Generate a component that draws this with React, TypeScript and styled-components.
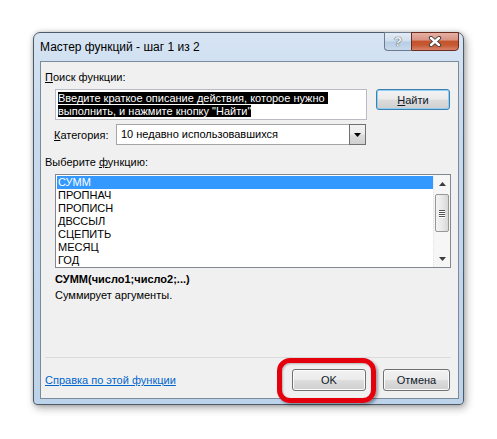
import React from "react";
import styled, { createGlobalStyle } from "styled-components";

const GlobalStyle = createGlobalStyle`
  html, body { margin: 0; padding: 0; background: #ffffff; }
  body { font-family: "Liberation Sans", Arial, sans-serif; }
  #root { width: 497px; height: 439px; }
`;

const Page = styled.div`
  width: 497px;
  height: 439px;
  box-sizing: border-box;
  padding: 32px 0 0 33px;
  background: #ffffff;
  overflow: hidden;
`;

const Window = styled.div`
  width: 431px;
  height: 373px;
  box-sizing: border-box;
  border: 1px solid #4e5a68;
  border-radius: 7px 7px 4px 4px;
  background: linear-gradient(180deg, #d6e4f3 0%, #c8daee 25%, #bcd3ea 100%);
  box-shadow: 2px 3px 9px rgba(0, 0, 0, 0.32), 0 0 4px rgba(0, 0, 0, 0.18);
  display: flex;
  flex-direction: column;
`;

const TitleBar = styled.div`
  height: 28px;
  flex: none;
  display: flex;
  align-items: flex-start;
  padding: 0 4px 0 6px;
`;

const Title = styled.div`
  flex: 1;
  font-size: 12px;
  line-height: 28px;
  color: #000;
  white-space: nowrap;
`;

const CaptionButtons = styled.div`
  display: flex;
  margin-top: -1px;
`;

const HelpButton = styled.div`
  width: 27px;
  height: 19px;
  box-sizing: border-box;
  border: 1px solid #6c7b8d;
  border-right: none;
  border-radius: 0 0 0 4px;
  background: linear-gradient(180deg, #e3ecf6 0%, #cfdeee 48%, #b7cce3 52%, #c7d9ec 100%);
  display: flex;
  align-items: center;
  justify-content: center;
  font-size: 13px;
  font-weight: bold;
  color: #f3f3f3;
  text-shadow: 0 0 1px #404a55, 0 0 1px #404a55;
`;

const CloseButton = styled.div`
  width: 48px;
  height: 19px;
  box-sizing: border-box;
  border: 1px solid #6a2c1e;
  border-radius: 0 0 4px 0;
  background: linear-gradient(180deg, #e6b0a4 0%, #d99484 40%, #c4532d 50%, #c65a33 72%, #d8826a 100%);
  display: flex;
  align-items: center;
  justify-content: center;
`;

const Client = styled.div`
  flex: 1;
  margin: 0 4px 5px 6px;
  border: 1px solid #7b8a9b;
  background: #f0f0f0;
  display: flex;
  flex-direction: column;
  padding: 8px 8px 7px 4px;
  font-size: 11px;
  color: #000;
`;

const Label = styled.div<{ $top?: number; $left?: number }>`
  line-height: 14px;
  height: 14px;
  margin-top: ${(p) => p.$top ?? 0}px;
  margin-left: ${(p) => p.$left ?? 0}px;
  white-space: nowrap;
`;

const Key = styled.span`
  text-decoration: underline;
`;

const SearchRow = styled.div`
  display: flex;
  align-items: flex-start;
  gap: 9px;
  margin: 5px 0 0 10px;
`;

const SearchBox = styled.div`
  width: 312px;
  height: 31px;
  box-sizing: border-box;
  border: 1px solid #abadb3;
  border-color: #abadb3 #dbdfe6 #e3e9ef #e2e3ea;
  background: #fff;
  padding: 2px;
  outline: 1px solid #b9bcc4;
  outline-offset: -1px;
`;

const SelLine = styled.div`
  height: 13px;
  line-height: 13px;
  white-space: pre;
`;

const Selected = styled.span`
  background: #000;
  color: #fff;
`;

const PushButton = styled.div<{ $w: number; $h?: number; $default?: boolean }>`
  width: ${(p) => p.$w}px;
  height: ${(p) => p.$h ?? 22}px;
  box-sizing: border-box;
  border: 1px solid ${(p) => (p.$default ? "#3c7fb1" : "#707070")};
  border-radius: 3px;
  background: linear-gradient(180deg, #f2f2f2 0%, #ebebeb 49%, #dddddd 51%, #cfcfcf 100%);
  box-shadow: inset 0 0 0 1px ${(p) => (p.$default ? "#8fd0f4" : "#fbfbfb")};
  display: flex;
  align-items: center;
  justify-content: center;
  font-size: 11px;
  color: #10192a;
  flex: none;
`;

const CategoryRow = styled.div`
  display: flex;
  align-items: center;
  margin: 4px 0 0 9px;
`;

const CategoryLabel = styled.div`
  width: 62px;
  line-height: 14px;
  white-space: nowrap;
`;

const Combo = styled.div`
  width: 250px;
  height: 21px;
  box-sizing: border-box;
  border: 1px solid #a5a5a5;
  background: #fff;
  display: flex;
  align-items: stretch;
`;

const ComboText = styled.div`
  flex: 1;
  padding-left: 4px;
  line-height: 19px;
  white-space: nowrap;
`;

const DropButton = styled.div`
  width: 17px;
  box-sizing: border-box;
  border: 1px solid #707070;
  margin: -1px -1px -1px 0;
  background: linear-gradient(180deg, #f2f2f2 0%, #ebebeb 49%, #dddddd 51%, #cfcfcf 100%);
  display: flex;
  align-items: center;
  justify-content: center;
`;

const List = styled.div`
  margin: 5px 0 0 10px;
  width: 396px;
  height: 94px;
  box-sizing: border-box;
  border: 1px solid #828790;
  background: #fff;
  display: flex;
  padding: 1px 0 1px 1px;
`;

const Items = styled.div`
  flex: 1;
`;

const Item = styled.div<{ $selected?: boolean }>`
  height: 13px;
  line-height: 13px;
  padding-left: 1px;
  background: ${(p) => (p.$selected ? "#3399ff" : "transparent")};
  color: ${(p) => (p.$selected ? "#fff" : "#000")};
`;

const ScrollBar = styled.div`
  width: 17px;
  margin-top: -1px;
  margin-bottom: -1px;
  background: #f6f6f6;
  border-left: 1px dotted #e2e2e2;
  box-sizing: border-box;
  display: flex;
  flex-direction: column;
  align-items: center;
`;

const ArrowCell = styled.div`
  height: 17px;
  width: 100%;
  display: flex;
  align-items: center;
  justify-content: center;
`;

const Thumb = styled.div`
  margin-top: 2px;
  width: 14px;
  height: 38px;
  box-sizing: border-box;
  border: 1px solid #979797;
  border-radius: 2px;
  background: linear-gradient(90deg, #f3f3f3 0%, #e9e9e9 50%, #d7d7d7 100%);
  display: flex;
  flex-direction: column;
  align-items: center;
  justify-content: center;
  gap: 1px;
`;

const Grip = styled.div`
  width: 6px;
  height: 1px;
  background: #555;
  box-shadow: 0 1px 0 #fff;
`;

const Track = styled.div`
  flex: 1;
`;

const Signature = styled.div`
  margin: 4px 0 0 10px;
  line-height: 14px;
  font-weight: bold;
  white-space: nowrap;
`;

const Description = styled.div`
  margin: 2px 0 0 10px;
  line-height: 14px;
`;

const Separator = styled.div`
  margin-top: auto;
  height: 1px;
  background: #dadada;
  margin-right: -1px;
`;

const Footer = styled.div`
  margin-top: 11px;
  height: 22px;
  display: flex;
  align-items: center;
`;

const HelpLink = styled.a`
  flex: 1;
  color: #0066cc;
  text-decoration: underline;
  font-size: 11px;
  line-height: 14px;
  cursor: pointer;
`;

const HighlightWrap = styled.div`
  position: relative;
  margin-right: 17px;
`;

const Ring = styled.div`
  position: absolute;
  top: -11px;
  left: -15px;
  right: -10px;
  bottom: -12px;
  border: 5px solid #e5000e;
  border-radius: 13px;
  box-shadow: 2px 2px 3px rgba(0, 0, 0, 0.35), inset 1px 1px 2px rgba(0, 0, 0, 0.25);
  pointer-events: none;
`;

const CloseGlyph = () => (
  <svg width="14" height="11" viewBox="0 0 14 11">
    <path d="M3 2 L11 9 M11 2 L3 9" stroke="#3a3a3a" strokeWidth="4.2" strokeLinecap="round" />
    <path d="M3 2 L11 9 M11 2 L3 9" stroke="#ffffff" strokeWidth="2.4" strokeLinecap="round" />
  </svg>
);

const DownTriangle = ({ w = 7, h = 4, c = "#000" }: { w?: number; h?: number; c?: string }) => (
  <svg width={w} height={h} viewBox={`0 0 ${w} ${h}`}>
    <path d={`M0 0 L${w} 0 L${w / 2} ${h} Z`} fill={c} />
  </svg>
);

const UpTriangle = ({ w = 7, h = 4, c = "#000" }: { w?: number; h?: number; c?: string }) => (
  <svg width={w} height={h} viewBox={`0 0 ${w} ${h}`}>
    <path d={`M0 ${h} L${w} ${h} L${w / 2} 0 Z`} fill={c} />
  </svg>
);

const functions = ["СУММ", "ПРОПНАЧ", "ПРОПИСН", "ДВССЫЛ", "СЦЕПИТЬ", "МЕСЯЦ", "ГОД"];

export default function App() {
  return (
    <>
      <GlobalStyle />
      <Page>
        <Window>
          <TitleBar>
            <Title>Мастер функций - шаг 1 из 2</Title>
            <CaptionButtons>
              <HelpButton>?</HelpButton>
              <CloseButton>
                <CloseGlyph />
              </CloseButton>
            </CaptionButtons>
          </TitleBar>
          <Client>
            <Label>
              <Key>П</Key>оиск функции:
            </Label>
            <SearchRow>
              <SearchBox>
                <SelLine>
                  <Selected>Введите краткое описание действия, которое нужно </Selected>
                </SelLine>
                <SelLine>
                  <Selected>выполнить, и нажмите кнопку "Найти"</Selected>
                </SelLine>
              </SearchBox>
              <PushButton $w={74} $h={21} $default>
                <span>
                  <Key>Н</Key>айти
                </span>
              </PushButton>
            </SearchRow>
            <CategoryRow>
              <CategoryLabel>
                <Key>К</Key>атегория:
              </CategoryLabel>
              <Combo>
                <ComboText>10 недавно использовавшихся</ComboText>
                <DropButton>
                  <DownTriangle w={7} h={4} />
                </DropButton>
              </Combo>
            </CategoryRow>
            <Label $top={10}>
              Выберите <Key>ф</Key>ункцию:
            </Label>
            <List>
              <Items>
                {functions.map((f, i) => (
                  <Item key={f} $selected={i === 0}>
                    {f}
                  </Item>
                ))}
              </Items>
              <ScrollBar>
                <ArrowCell>
                  <UpTriangle w={7} h={4} c="#3c3c3c" />
                </ArrowCell>
                <Thumb>
                  <Grip />
                  <Grip />
                  <Grip />
                  <Grip />
                </Thumb>
                <Track />
                <ArrowCell>
                  <DownTriangle w={7} h={4} c="#3c3c3c" />
                </ArrowCell>
              </ScrollBar>
            </List>
            <Signature>СУММ(число1;число2;...)</Signature>
            <Description>Суммирует аргументы.</Description>
            <Separator />
            <Footer>
              <HelpLink>Справка по этой функции</HelpLink>
              <HighlightWrap>
                <PushButton $w={74}>OK</PushButton>
                <Ring />
              </HighlightWrap>
              <PushButton $w={67}>Отмена</PushButton>
            </Footer>
          </Client>
        </Window>
      </Page>
    </>
  );
}
